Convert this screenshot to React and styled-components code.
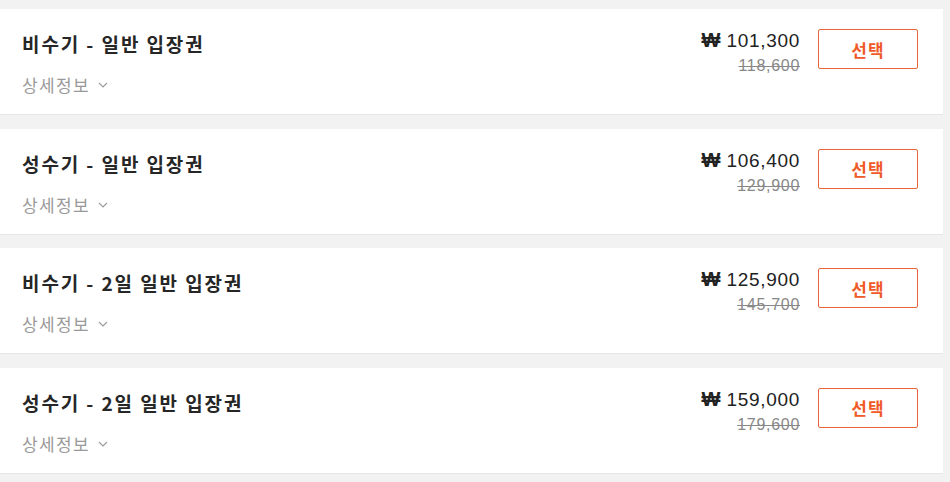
import React from "react";
import styled, { createGlobalStyle } from "styled-components";

const GlobalStyle = createGlobalStyle`
  body {
    margin: 0;
    background: #f2f2f2;
    font-family: "Noto Sans CJK KR", "Liberation Sans", sans-serif;
  }
`;

const List = styled.div`
  display: flex;
  flex-direction: column;
  gap: 13.5px;
  padding: 9px 7px 0 0;
`;

const Card = styled.div`
  display: flex;
  align-items: flex-start;
  justify-content: space-between;
  height: 106px;
  box-sizing: border-box;
  background: #fff;
  border-bottom: 1px solid #e6e6e6;
  padding: 20px 25px 0 22px;
`;

const Info = styled.div`
  display: flex;
  flex-direction: column;
  gap: 16px;
`;

const Title = styled.h3`
  margin: 2px 0 0;
  font-size: 19px;
  font-weight: 700;
  color: #262626;
  line-height: 26px;
  letter-spacing: 1.9px;
`;

const Detail = styled.button`
  display: flex;
  align-items: center;
  gap: 8px;
  padding: 0;
  border: none;
  background: none;
  font-family: inherit;
  font-size: 17px;
  color: #9a9a9a;
  line-height: 24px;
  letter-spacing: 1.4px;
  cursor: pointer;
`;

const Side = styled.div`
  display: flex;
  align-items: flex-start;
  gap: 18px;
`;

const Prices = styled.div`
  display: flex;
  flex-direction: column;
  align-items: flex-end;
`;

const Price = styled.div`
  font-family: "Liberation Sans", sans-serif;
  font-size: 19px;
  color: #222;
  line-height: 22px;
  letter-spacing: 0.7px;
`;

const Won = styled.span`
  font-weight: 700;
  font-size: 20px;
  margin-right: 6px;
  letter-spacing: 0;
`;

const OldPrice = styled.div`
  font-family: "Liberation Sans", sans-serif;
  font-size: 16px;
  color: #888;
  text-decoration: line-through;
  line-height: 20px;
  letter-spacing: 0.7px;
  margin-top: 4px;
`;

const SelectButton = styled.button`
  width: 100px;
  height: 40px;
  border: 1px solid #e8623a;
  border-radius: 2px;
  background: #fff;
  color: #f05a28;
  font-family: inherit;
  font-size: 17px;
  font-weight: 700;
  letter-spacing: 1px;
  cursor: pointer;
`;

const Chevron = () => (
  <svg width="10" height="6" viewBox="0 0 10 6" fill="none">
    <path d="M1 1l4 4 4-4" stroke="#999" strokeWidth="1.1" />
  </svg>
);

const tickets = [
  { name: "비수기 - 일반 입장권", price: "101,300", old: "118,600" },
  { name: "성수기 - 일반 입장권", price: "106,400", old: "129,900" },
  { name: "비수기 - 2일 일반 입장권", price: "125,900", old: "145,700" },
  { name: "성수기 - 2일 일반 입장권", price: "159,000", old: "179,600" },
];

const App = () => (
  <>
    <GlobalStyle />
    <List>
      {tickets.map((t) => (
        <Card key={t.name}>
          <Info>
            <Title>{t.name}</Title>
            <Detail>
              상세정보 <Chevron />
            </Detail>
          </Info>
          <Side>
            <Prices>
              <Price>
                <Won>₩</Won>
                {t.price}
              </Price>
              <OldPrice>{t.old}</OldPrice>
            </Prices>
            <SelectButton>선택</SelectButton>
          </Side>
        </Card>
      ))}
    </List>
  </>
);

export default App;
